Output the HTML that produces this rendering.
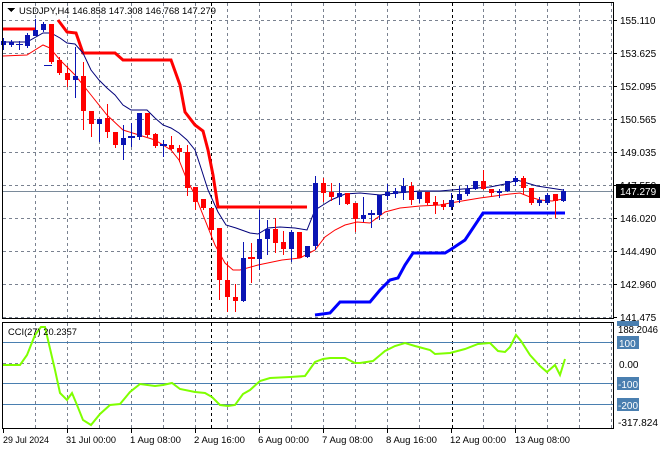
<!DOCTYPE html>
<html><head><meta charset="utf-8"><style>
body{margin:0;width:660px;height:450px;background:#fff;overflow:hidden;font-family:"Liberation Sans",sans-serif}
svg text{font-family:"Liberation Sans",sans-serif;font-size:10px;fill:#000}
svg text.s{font-size:9.5px}
</style></head><body>
<svg width="660" height="450" xmlns="http://www.w3.org/2000/svg" shape-rendering="crispEdges">
<rect width="660" height="450" fill="#fff"/>
<g stroke="#7a8290" stroke-dasharray="3,3" stroke-width="1">
<path d="M3 20.5H613M3 53.5H613M3 86.5H613M3 119.5H613M3 152.5H613M3 185.5H613M3 218.5H613M3 251.5H613M3 284.5H613M3 317.5H613"/>
<path d="M35.5 3V318M67.5 3V318M99.5 3V318M131.5 3V318M163.5 3V318M195.5 3V318M227.5 3V318M259.5 3V318M291.5 3V318M323.5 3V318M355.5 3V318M387.5 3V318M419.5 3V318M483.5 3V318M515.5 3V318M547.5 3V318M579.5 3V318M611.5 3V318"/>
<path d="M35.5 323V428M67.5 323V428M99.5 323V428M131.5 323V428M163.5 323V428M195.5 323V428M227.5 323V428M259.5 323V428M291.5 323V428M323.5 323V428M355.5 323V428M387.5 323V428M419.5 323V428M483.5 323V428M515.5 323V428M547.5 323V428M579.5 323V428M611.5 323V428M3 363.5H613"/>
</g>
<g stroke="#000" stroke-dasharray="3,3"><path d="M211.5 3V318M452.5 3V318M211.5 323V428M452.5 323V428"/></g>
<path d="M3 191.5H613" stroke="#7a8a9a"/>
<g stroke="#4a7fb0"><path d="M3 342.5H613M3 383.5H613M3 404.5H613"/></g>
<g shape-rendering="auto" fill="none">
<polyline stroke="#ff0000" stroke-width="3" points="3,29 35,29"/>
<polyline stroke="#ff0000" stroke-width="3" points="58,20 67,32 76,33 83,53 115,53 123,60 171,60 180,85 185,112 195,125 203,131 208,150 213,175 218,207 307,207"/>
<polyline stroke="#00007a" stroke-width="1" points="3,42 27,42 43,33 51,33 60,38 67,43 75,44 83,53 91,70 99,80 107,88 115,95 123,105 131,110 147,110 155,118 163,125 171,128 179,133 187,140 195,150 200,165 208,190 218,212 226,225 236,228 250,233 258,234 268,228 280,227 295,228 307,230 315,210 323,205 331,200 345,194 360,193 380,195 396,193 420,191 440,191 463,189 490,187 505,184 517,180 537,186 550,188 563,190"/>
<polyline stroke="#ff0000" stroke-width="1" points="3,56 27,55 43,45 50,48 60,60 75,75 91,95 107,115 123,130 139,135 155,140 163,145 171,150 179,160 187,180 195,195 205,220 215,245 225,263 233,270 240,270 258,265 282,260 300,258 315,250 325,237 335,230 345,225 357,222 370,223 385,212 400,208 420,206 440,205 450,203 480,198 495,196 510,194 520,193 530,197 540,200 552,201 563,199"/>
<polyline stroke="#0000ff" stroke-width="3" points="315,315 330,313 340,302 370,302 380,290 390,280 398,278 405,265 413,253 445,253 450,250 465,240 475,225 483,213 565,213"/>
</g>
<g>
<g stroke="#0a14b4" fill="#0a14b4">
<path d="M3.5 38V50M11.5 40V47M19.5 41V50M27.5 33V48M35.5 19V36M43.5 22V32M75.5 47V98M99.5 119V142M123.5 125V160M131.5 123V147M139.5 113V140M163.5 140V157M243.5 242V302M259.5 210V270M267.5 220V255M291.5 230V262M307.5 246V258M315.5 176V250M339.5 183V205M363.5 197V222M371.5 210V228M379.5 195V220M387.5 184V200M395.5 188V198M403.5 178V200M419.5 192V203M451.5 193V210M459.5 186V203M467.5 185V196M475.5 181V190M499.5 189V198M507.5 181V192M515.5 176V186M539.5 197V206M547.5 193V205M563.5 189V202M44 65.5H52"/>
</g>
<g fill="#0a14b4">
<rect x="1" y="41" width="5" height="4"/><rect x="9" y="42" width="5" height="3"/><rect x="16" y="44" width="7" height="1"/><rect x="25" y="35" width="5" height="11"/><rect x="33" y="30" width="5" height="6"/><rect x="41" y="24" width="5" height="6"/><rect x="73" y="76" width="5" height="4"/><rect x="97" y="119" width="5" height="5"/><rect x="121" y="138" width="5" height="7"/><rect x="128" y="136" width="7" height="2"/><rect x="137" y="113" width="5" height="24"/><rect x="160" y="144" width="7" height="2"/><rect x="241" y="258" width="5" height="43"/><rect x="257" y="239" width="5" height="20"/><rect x="265" y="229" width="5" height="10"/><rect x="289" y="232" width="5" height="17"/><rect x="305" y="246" width="5" height="11"/><rect x="313" y="183" width="5" height="63"/><rect x="337" y="193" width="5" height="4"/><rect x="361" y="215" width="5" height="4"/><rect x="368" y="213" width="7" height="2"/><rect x="377" y="195" width="5" height="20"/><rect x="385" y="192" width="5" height="4"/><rect x="393" y="191" width="5" height="3"/><rect x="401" y="186" width="5" height="7"/><rect x="417" y="192" width="5" height="7"/><rect x="449" y="200" width="5" height="7"/><rect x="457" y="194" width="5" height="6"/><rect x="465" y="189" width="5" height="5"/><rect x="473" y="181" width="5" height="8"/><rect x="497" y="191" width="5" height="2"/><rect x="505" y="181" width="5" height="10"/><rect x="513" y="178" width="5" height="4"/><rect x="537" y="200" width="5" height="3"/><rect x="545" y="195" width="5" height="8"/><rect x="561" y="191" width="5" height="10"/>
</g>
<g stroke="#ff0000">
<path d="M51.5 24V64M59.5 57V75M67.5 66V87M83.5 62V130M91.5 111V137M107.5 104V138M115.5 132V148M147.5 113V137M155.5 133V148M171.5 136V150M179.5 145V162M187.5 145V196M195.5 187V210M203.5 199V210M211.5 208V238M219.5 228V300M227.5 262V312M235.5 284V312M251.5 243V283M275.5 218V253M283.5 231V255M299.5 232V258M323.5 178V202M331.5 183V201M347.5 193V205M355.5 203V232M411.5 182V205M427.5 192V205M435.5 196V214M443.5 200V210M483.5 170V190M491.5 189V197M523.5 176V195M531.5 188V205M555.5 194V218"/>
</g>
<g fill="#ff0000">
<rect x="49" y="24" width="5" height="38"/><rect x="57" y="60" width="5" height="13"/><rect x="65" y="73" width="5" height="7"/><rect x="81" y="76" width="5" height="35"/><rect x="89" y="111" width="5" height="13"/><rect x="105" y="118" width="5" height="14"/><rect x="113" y="132" width="5" height="13"/><rect x="145" y="113" width="5" height="22"/><rect x="153" y="134" width="5" height="12"/><rect x="169" y="145" width="5" height="4"/><rect x="177" y="148" width="5" height="4"/><rect x="185" y="152" width="5" height="36"/><rect x="193" y="187" width="5" height="15"/><rect x="201" y="199" width="5" height="9"/><rect x="209" y="208" width="5" height="22"/><rect x="217" y="228" width="5" height="52"/><rect x="225" y="280" width="5" height="17"/><rect x="233" y="297" width="5" height="4"/><rect x="248" y="257" width="7" height="2"/><rect x="273" y="229" width="5" height="14"/><rect x="281" y="242" width="5" height="7"/><rect x="297" y="232" width="5" height="26"/><rect x="321" y="183" width="5" height="10"/><rect x="329" y="192" width="5" height="5"/><rect x="345" y="193" width="5" height="11"/><rect x="353" y="203" width="5" height="16"/><rect x="409" y="186" width="5" height="14"/><rect x="425" y="192" width="5" height="11"/><rect x="433" y="202" width="5" height="3"/><rect x="441" y="204" width="5" height="3"/><rect x="481" y="181" width="5" height="8"/><rect x="489" y="189" width="5" height="4"/><rect x="521" y="178" width="5" height="10"/><rect x="529" y="188" width="5" height="15"/><rect x="553" y="194" width="5" height="7"/>
</g>
</g>
<polyline shape-rendering="auto" fill="none" stroke="#7fff00" stroke-width="2" points="3,365 20,365 27,355 35,335 41,327 45,327 48,340 55,370 60,393 67,400 72,393 77,405 83,420 91,425 100,414 110,405 120,404 130,392 140,384 155,386 163,385 172,383 180,389 195,392 205,393 212,397 220,405 228,406 235,405 243,394 250,390 260,381 270,378 290,377 305,376 315,362 323,359 330,358 345,358 355,363 360,363 373,361 385,351 395,346 405,343 415,346 430,350 435,354 450,353 465,349 478,344 490,343 498,351 505,352 510,347 516,335 521,341 530,355 540,366 547,372 555,365 560,375 565,359"/>
<rect x="2.5" y="2.5" width="611" height="316" fill="none" stroke="#000"/>
<rect x="2.5" y="322.5" width="611" height="106" fill="none" stroke="#000"/>
<path d="M613 20.5h4M613 53.5h4M613 86.5h4M613 119.5h4M613 152.5h4M613 185.5h4M613 218.5h4M613 251.5h4M613 284.5h4M613 317.5h4M3.5 429v4M67.5 429v4M131.5 429v4M195.5 429v4M259.5 429v4M323.5 429v4M387.5 429v4M451.5 429v4M515.5 429v4" stroke="#000"/>
<path d="M7 8h8l-4 4z" fill="#000"/>
<text class="s" x="19" y="14" textLength="197" lengthAdjust="spacingAndGlyphs">USDJPY,H4  146.858 147.308 146.768 147.279</text>
<text class="s" x="8" y="335" textLength="69" lengthAdjust="spacingAndGlyphs">CCI(27) 20.2357</text>
<text x="620" y="24">155.110</text><text x="620" y="57">153.625</text><text x="620" y="90">152.095</text><text x="620" y="123">150.565</text><text x="620" y="156">149.035</text><text x="620" y="189">147.550</text><text x="620" y="222">146.020</text><text x="620" y="255">144.490</text><text x="620" y="288">142.960</text><text x="620" y="321">141.475</text>
<rect x="616" y="184" width="44" height="14" fill="#000"/><text x="620" y="195" style="fill:#fff">147.279</text>
<rect x="617" y="321" width="22" height="5" fill="#4a7fb0"/>
<text x="618" y="333" textLength="40" lengthAdjust="spacingAndGlyphs">188.2046</text>
<rect x="617" y="336" width="22" height="13" fill="#4a7fb0"/><text x="619" y="347" style="fill:#fff">100</text>
<text x="619" y="368">0.00</text>
<rect x="617" y="377" width="22" height="13" fill="#4a7fb0"/><text x="618" y="388" style="fill:#fff">-100</text>
<rect x="617" y="398" width="22" height="13" fill="#4a7fb0"/><text x="618" y="409" style="fill:#fff">-200</text>
<text x="618" y="426" textLength="40" lengthAdjust="spacingAndGlyphs">-317.824</text>
<g class="t">
<text class="s" x="3" y="443" textLength="46" lengthAdjust="spacingAndGlyphs">29 Jul 2024</text>
<text class="s" x="66" y="443" textLength="50" lengthAdjust="spacingAndGlyphs">31 Jul 00:00</text>
<text class="s" x="130" y="443" textLength="51" lengthAdjust="spacingAndGlyphs">1 Aug 08:00</text>
<text class="s" x="194" y="443" textLength="51" lengthAdjust="spacingAndGlyphs">2 Aug 16:00</text>
<text class="s" x="258" y="443" textLength="51" lengthAdjust="spacingAndGlyphs">6 Aug 00:00</text>
<text class="s" x="322" y="443" textLength="51" lengthAdjust="spacingAndGlyphs">7 Aug 08:00</text>
<text class="s" x="386" y="443" textLength="51" lengthAdjust="spacingAndGlyphs">8 Aug 16:00</text>
<text class="s" x="450" y="443" textLength="56" lengthAdjust="spacingAndGlyphs">12 Aug 00:00</text>
<text class="s" x="515" y="443" textLength="55" lengthAdjust="spacingAndGlyphs">13 Aug 08:00</text>
</g>
</svg>
</body></html>
